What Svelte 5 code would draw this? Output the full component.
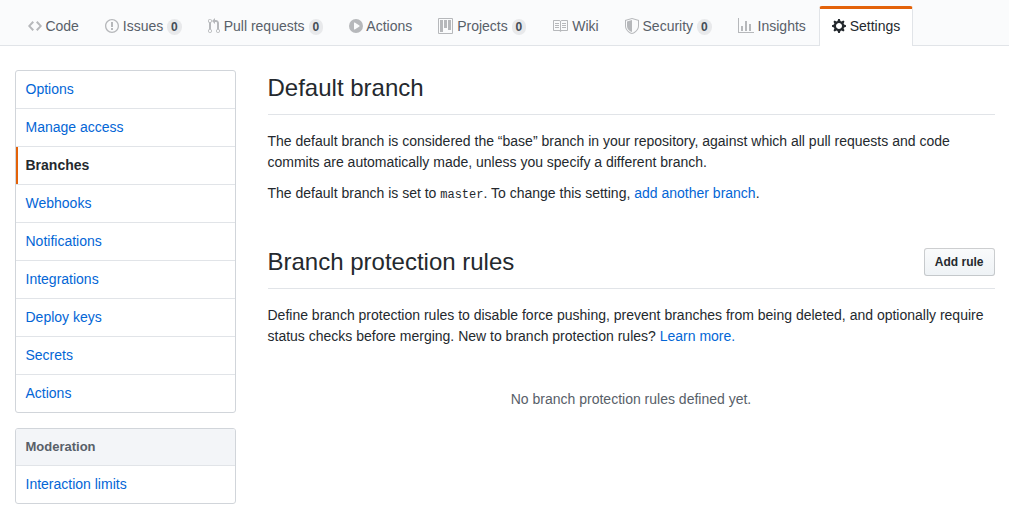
<script>
  const tabs = [
    { label: 'Code', w: 14, d: 'M9.5 3L8 4.5 11.5 8 8 11.5 9.5 13 14 8 9.5 3zm-5 0L0 8l4.5 5L6 11.5 2.5 8 6 4.5 4.5 3z' },
    { label: 'Issues', w: 14, count: 0, d: 'M7 2.3c3.14 0 5.7 2.56 5.7 5.7s-2.56 5.7-5.7 5.7A5.71 5.71 0 011.3 8c0-3.14 2.56-5.7 5.7-5.7zM7 1C3.14 1 0 4.14 0 8s3.14 7 7 7 7-3.14 7-7-3.14-7-7-7zm1 3H6v5h2V4zm0 6H6v2h2v-2z' },
    { label: 'Pull requests', w: 12, count: 0, d: 'M11 11.28V5c-.03-.78-.34-1.47-.94-2.06C9.46 2.35 8.78 2.03 8 2H7V0L4 3l3 3V4h1c.27.02.48.11.69.31.21.2.3.42.31.69v6.28A1.993 1.993 0 0010 15a1.993 1.993 0 001-3.72zm-1 2.92c-.66 0-1.2-.55-1.2-1.2 0-.65.55-1.2 1.2-1.2.65 0 1.2.55 1.2 1.2 0 .65-.55 1.2-1.2 1.2zM4 3c0-1.11-.89-2-2-2a1.993 1.993 0 00-1 3.72v6.56A1.993 1.993 0 002 15a1.993 1.993 0 001-3.72V4.72c.59-.34 1-.98 1-1.72zm-.8 10c0 .66-.55 1.2-1.2 1.2-.65 0-1.2-.55-1.2-1.2 0-.65.55-1.2 1.2-1.2.65 0 1.2.55 1.2 1.2zM2 4.2C1.34 4.2.8 3.65.8 3c0-.65.55-1.2 1.2-1.2.65 0 1.2.55 1.2 1.2 0 .65-.55 1.2-1.2 1.2z' },
    { label: 'Actions', w: 14, d: 'M14 8A7 7 0 110 8a7 7 0 0114 0zm-8.223 3.482l4.599-3.066a.5.5 0 000-.832L5.777 4.518A.5.5 0 005 4.934v6.132a.5.5 0 00.777.416z' },
    { label: 'Projects', w: 15, count: 0, d: 'M10 12h3V2h-3v10zm-4-2h3V2H6v8zm-4 4h3V2H2v12zm-1 1h13V1H1v14zM14 0H1a1 1 0 00-1 1v14a1 1 0 001 1h13a1 1 0 001-1V1a1 1 0 00-1-1z' },
    { label: 'Wiki', w: 16, d: 'M3 5h4v1H3V5zm0 3h4V7H3v1zm0 2h4V9H3v1zm11-5h-4v1h4V5zm0 2h-4v1h4V7zm0 2h-4v1h4V9zm2-6v9c0 .55-.45 1-1 1H9.5l-1 1-1-1H2c-.55 0-1-.45-1-1V3c0-.55.45-1 1-1h5.5l1 1 1-1H15c.55 0 1 .45 1 1zm-8 .5L7.5 3H2v9h6V3.5zm7-.5H9.5l-.5.5V12h6V3z' },
    { label: 'Security', w: 14, count: 0, d: 'M0 2l7-2 7 2v6.02C14 12.69 8.69 16 7 16c-1.69 0-7-3.31-7-7.98V2zm1 .75L7 1l6 1.75v5.268C13 12.104 8.449 15 7 15c-1.449 0-6-2.896-6-6.982V2.75zm1 .75L7 2v12c-1.207 0-5-2.482-5-5.985V3.5z' },
    { label: 'Insights', w: 16, d: 'M16 14v1H0V0h1v14h15zM5 13H3V8h2v5zm4 0H7V3h2v10zm4 0h-2V6h2v7z' },
    { label: 'Settings', w: 14, selected: true, d: 'M14 8.77v-1.6l-1.94-.64-.45-1.09.88-1.84-1.13-1.13-1.81.91-1.09-.45-.69-1.92h-1.6l-.63 1.94-1.11.45-1.84-.88-1.13 1.13.91 1.81-.45 1.09L0 7.23v1.59l1.94.64.45 1.09-.88 1.84 1.13 1.13 1.81-.91 1.09.45.69 1.92h1.59l.63-1.94 1.11-.45 1.84.88 1.13-1.13-.92-1.81.47-1.09L14 8.75v.02zM7 11c-1.66 0-3-1.34-3-3s1.34-3 3-3 3 1.34 3 3-1.34 3-3 3z' },
  ];
  const menu = ['Options', 'Manage access', 'Branches', 'Webhooks', 'Notifications', 'Integrations', 'Deploy keys', 'Secrets', 'Actions'];
</script>

<header class="pagehead">
  <nav class="container tabs">
    {#each tabs as tab}
      <a class="tab" class:selected={tab.selected} href="#top">
        <svg width={tab.w} height="16" viewBox="0 0 {tab.w} 16" aria-hidden="true"><path fill-rule="evenodd" d={tab.d} /></svg>
        <span>{tab.label}</span>
        {#if tab.count !== undefined}<span class="counter">{tab.count}</span>{/if}
      </a>
    {/each}
  </nav>
</header>

<div class="container layout">
  <aside>
    <nav class="menu">
      {#each menu as item}
        <a class="item" class:current={item === 'Branches'} href="#top">{item}</a>
      {/each}
    </nav>
    <nav class="menu">
      <h3>Moderation</h3>
      <a class="item" href="#top">Interaction limits</a>
    </nav>
  </aside>

  <main>
    <section>
      <div class="subhead"><h2>Default branch</h2></div>
      <p>The default branch is considered the “base” branch in your repository, against which all pull requests and code commits are automatically made, unless you specify a different branch.</p>
      <p>The default branch is set to <code>master</code>. To change this setting, <a href="#top">add another branch</a>.</p>
    </section>
    <section>
      <div class="subhead">
        <h2>Branch protection rules</h2>
        <button type="button">Add rule</button>
      </div>
      <p>Define branch protection rules to disable force pushing, prevent branches from being deleted, and optionally require status checks before merging. New to branch protection rules? <a href="#top">Learn more.</a></p>
      <p class="blank">No branch protection rules defined yet.</p>
    </section>
  </main>
</div>

<style>
  :global(body) {
    margin: 0;
    overflow: hidden;
    background: #fff;
    color: #24292e;
    font: 14px/1.5 "Liberation Sans", Arial, sans-serif;
  }
  a { color: #0366d6; text-decoration: none; }
  .container { width: 980px; margin: 0 auto; }

  .pagehead {
    height: 45px;
    background: #fafbfc;
    border-bottom: 1px solid #e1e4e8;
  }
  .tabs { display: flex; padding-top: 6px; }
  .tab {
    height: 21px;
    padding: 7px 12px 8px;
    border: 1px solid transparent;
    border-top-width: 3px;
    border-bottom: 0;
    border-radius: 3px 3px 0 0;
    color: #586069;
    white-space: nowrap;
  }
  .tab svg { vertical-align: text-bottom; fill: rgba(27, 31, 35, 0.3); }
  .tab.selected {
    padding-bottom: 9px;
    background: #fff;
    border-color: #e36209 #e1e4e8 transparent;
    color: #24292e;
  }
  .tab.selected svg { fill: currentColor; }
  .counter {
    display: inline-block;
    padding: 2px 4px;
    border-radius: 20px;
    background: rgba(27, 31, 35, 0.08);
    color: #444d56;
    font-size: 12px;
    font-weight: 600;
    line-height: 1;
    vertical-align: 0.5px;
  }

  .layout { display: flex; gap: 32px; padding-top: 24px; }
  aside { width: 221px; flex: none; }
  .menu {
    margin-bottom: 15px;
    border: 1px solid #d1d5da;
    border-radius: 3px;
    overflow: hidden;
  }
  .item {
    display: block;
    padding: 8px 10px;
    border-bottom: 1px solid #e1e4e8;
  }
  .item:last-child { border-bottom: 0; }
  .item.current {
    box-shadow: inset 2px 0 #e36209;
    color: #24292e;
    font-weight: 600;
  }
  h3 {
    margin: 0;
    padding: 8px 10px;
    border-bottom: 1px solid #e1e4e8;
    background: #f3f5f8;
    color: #586069;
    font-size: 13px;
    font-weight: 600;
  }

  main { flex: 1; min-width: 0; }
  section { margin-bottom: 40px; }
  .subhead {
    display: flex;
    align-items: center;
    justify-content: space-between;
    height: 36px;
    padding-bottom: 8px;
    margin-bottom: 16px;
    border-bottom: 1px solid #e1e4e8;
  }
  h2 { margin: 0; font-size: 24px; font-weight: 400; }
  p { margin: 0 0 10px; }
  code { font: 12px "Liberation Mono", monospace; }
  button {
    padding: 3px 10px;
    border: 1px solid rgba(27, 31, 35, 0.2);
    border-radius: 3px;
    background: #eff3f6 linear-gradient(-180deg, #fafbfc, #eff3f6 90%) -1px -1px / 110% 110%;
    color: #24292e;
    font: 600 12px/20px "Liberation Sans", Arial, sans-serif;
  }
  .blank { padding-top: 32px; color: #586069; text-align: center; }
</style>
